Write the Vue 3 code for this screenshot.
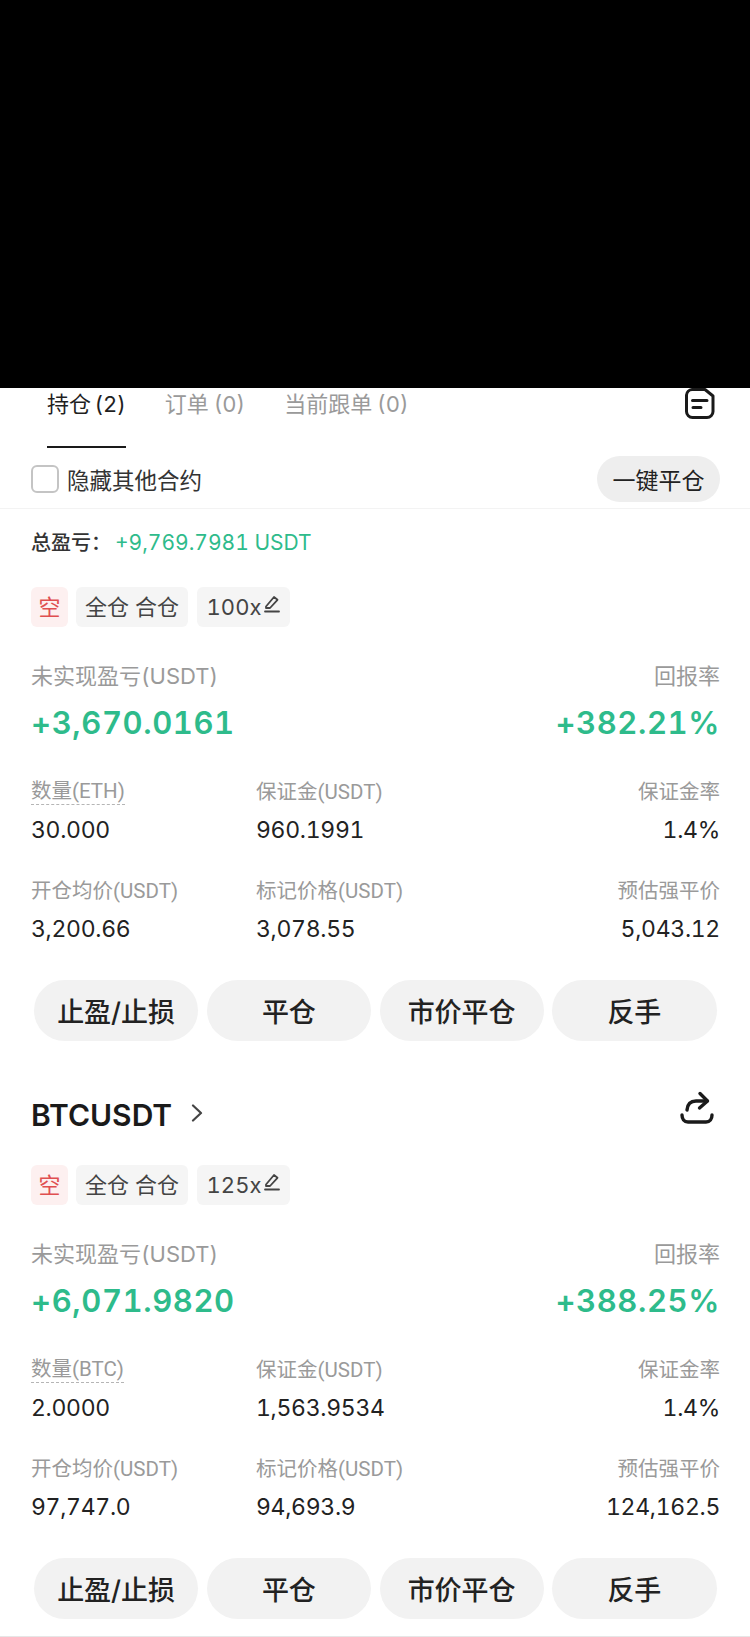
<script setup>
const cards = [
  {
    id: 'eth', lev: '100x', pnl: '+3,670.0161', roe: '+382.21%',
    rows: [
      [{ l: '数量(ETH)', v: '30.000', dash: true }, { l: '保证金(USDT)', v: '960.1991' }, { l: '保证金率', v: '1.4%' }],
      [{ l: '开仓均价(USDT)', v: '3,200.66' }, { l: '标记价格(USDT)', v: '3,078.55' }, { l: '预估强平价', v: '5,043.12' }]
    ]
  },
  {
    id: 'btc', title: 'BTCUSDT', lev: '125x', pnl: '+6,071.9820', roe: '+388.25%',
    rows: [
      [{ l: '数量(BTC)', v: '2.0000', dash: true }, { l: '保证金(USDT)', v: '1,563.9534' }, { l: '保证金率', v: '1.4%' }],
      [{ l: '开仓均价(USDT)', v: '97,747.0' }, { l: '标记价格(USDT)', v: '94,693.9' }, { l: '预估强平价', v: '124,162.5' }]
    ]
  }
]
const actions = ['止盈/止损', '平仓', '市价平仓', '反手']
</script>

<template>
  <div class="page">
    <div class="mask"></div>
    <nav class="tabs">
      <span class="tab active">持仓 (2)</span>
      <span class="tab">订单 (0)</span>
      <span class="tab">当前跟单 (0)</span>
      <svg class="doc" width="30" height="31" viewBox="0 0 30 31" fill="none" stroke="#1a1a1a" stroke-width="3" stroke-linecap="round" stroke-linejoin="round">
        <path d="M7 1.5H20L28 8V23.5A6 6 0 0 1 22 29.5H7.5A6 6 0 0 1 1.5 23.5V7A6 6 0 0 1 7 1.5Z" />
        <path d="M7.5 12.5H22M8 19.5H16" />
      </svg>
    </nav>
    <div class="filter">
      <label class="check"><i class="box"></i>隐藏其他合约</label>
      <button class="close-all">一键平仓</button>
    </div>
    <div class="total"><span>总盈亏：</span><em>+9,769.7981 USDT</em></div>

    <section v-for="c in cards" :key="c.id" class="card" :class="c.id">
      <header v-if="c.title" class="head">
        <strong>{{ c.title }}</strong>
        <svg class="chev" width="12" height="18" viewBox="0 0 12 18" fill="none" stroke="#444" stroke-width="2.2" stroke-linecap="round" stroke-linejoin="round"><path d="M2 1.5L10 9L2 16.5" /></svg>
        <svg class="share" width="36" height="34" viewBox="0 0 36 34" fill="none" stroke="#1a1a1a" stroke-width="3.4" stroke-linecap="round" stroke-linejoin="round">
          <path d="M3 24C3 28 5 31 9 31H27C31 31 33 28 33 24" />
          <path d="M8 19C8.5 13 12 10 17 10H28" />
          <path d="M21 2.5L28.5 10L20.5 17" />
        </svg>
      </header>
      <div class="tags">
        <span class="tag short">空</span>
        <span class="tag mode">全仓 合仓</span>
        <span class="tag lev">{{ c.lev }}
          <svg width="16" height="18" viewBox="0 0 16 18" fill="none" stroke="#444" stroke-width="1.8" stroke-linecap="round" stroke-linejoin="round"><path d="M2 11.5L10 2L13.5 4.8L6 13H2V11.5Z" /><path d="M1 16.5H15" /></svg>
        </span>
      </div>
      <div class="pnl">
        <div class="pnl-col"><span class="label">未实现盈亏(USDT)</span><b>{{ c.pnl }}</b></div>
        <div class="pnl-col right"><span class="label">回报率</span><b>{{ c.roe }}</b></div>
      </div>
      <div class="grid">
        <template v-for="(row, i) in c.rows" :key="i">
          <div v-for="(cell, j) in row" :key="j" class="cell">
            <span class="label" :class="{ dash: cell.dash }">{{ cell.l }}</span>
            <span class="value">{{ cell.v }}</span>
          </div>
        </template>
      </div>
      <div class="actions">
        <button v-for="a in actions" :key="a">{{ a }}</button>
      </div>
    </section>
    <div class="bottom"></div>
  </div>
</template>

<style>
html, body { margin: 0; background: #fff; }
</style>

<style scoped>
.page {
  width: 750px;
  height: 1637px;
  overflow: hidden;
  position: relative;
  background: #fff;
  font-family: Inter, "Noto Sans CJK SC", sans-serif;
  font-variant-numeric: tabular-nums;
  color: #1f1f1f;
}
.mask { height: 388px; background: #000; }
.tabs {
  height: 61px;
  display: flex;
  padding-left: 47px;
  gap: 39px;
  position: relative;
}
.tab {
  font-size: 22px;
  line-height: 32px;
  color: #9a9a9a;
  height: 34px;
  word-spacing: -1px;
}
.tab.active { color: #1f1f1f; position: relative; word-spacing: -2px; letter-spacing: -0.1px; }
.tab.active::after {
  content: "";
  position: absolute;
  left: 0;
  right: 0;
  top: 58px;
  height: 2px;
  background: #1a1a1a;
}
.doc { position: absolute; right: 35px; top: 0; }
.filter {
  height: 59px;
  border-bottom: 1px solid #f3f3f3;
  padding: 0 30px 0 31px;
  display: flex;
  align-items: center;
  justify-content: space-between;
}
.check {
  display: flex;
  align-items: center;
  gap: 8px;
  font-size: 22.5px;
  color: #333;
}
.box {
  width: 24px;
  height: 24px;
  border: 2px solid #c4c4c4;
  border-radius: 6px;
}
.close-all {
  width: 123px;
  height: 46px;
  margin-top: 1px;
  border: 0;
  border-radius: 23px;
  background: #eeeeee;
  font: inherit;
  font-size: 23px;
  color: #222;
  padding: 0;
}
.total {
  margin-top: 23px;
  padding-left: 31px;
  line-height: 22px;
  font-size: 20px;
  display: flex;
  align-items: center;
}
.total span { width: 84px; color: #333; font-weight: 500; }
.total em { font-style: normal; font-size: 21px; color: #2ebb8b; }
.card { padding: 0 30px 0 31px; }
.head {
  margin-top: 56px;
  height: 36px;
  display: flex;
  align-items: center;
  position: relative;
}
.head strong { font-size: 30px; font-weight: 600; color: #1a1a1a; }
.chev { margin-left: 19px; margin-top: -5px; }
.share { position: absolute; right: 5px; top: -6px; }
.tags { display: flex; margin-top: 33px; gap: 8px; }
.btc .tags { margin-top: 32px; }
.tag {
  height: 40px;
  line-height: 40px;
  box-sizing: border-box;
  border-radius: 6px;
  font-size: 22px;
  background: #f5f5f5;
  color: #444;
  display: flex;
  align-items: center;
  justify-content: center;
}
.tag.short { width: 37px; background: #fdf0f0; color: #e04f50; }
.tag.mode { width: 112px; }
.tag.lev { width: 93px; margin-left: 1px; gap: 3px; }
.tag.lev svg { margin-top: -6px; }
.pnl {
  margin-top: 36px;
  display: flex;
  justify-content: space-between;
}
.pnl-col { display: flex; flex-direction: column; }
.pnl-col.right { align-items: flex-end; }
.pnl .label { font-size: 22px; }
.pnl b {
  margin-top: 16px;
  font-size: 31px;
  line-height: 36px;
  font-weight: 600;
  color: #2ebb8b;
  letter-spacing: 0.6px;
}
.label { line-height: 26px; color: #9a9a9a; }
.grid {
  margin-top: 38px;
  display: grid;
  grid-template-columns: 225px 1fr 1fr;
  row-gap: 34px;
}
.grid .label { font-family: Roboto, "Noto Sans CJK SC", sans-serif; font-size: 20.5px; }
.cell { display: flex; flex-direction: column; align-items: flex-start; }
.cell:nth-child(3n) { align-items: flex-end; }
.grid .label.dash {
  line-height: 24px;
  height: 25px;
  border-bottom: 1px dashed #b5b5b5;
}
.value {
  margin-top: 11px;
  font-size: 23px;
  line-height: 28px;
  letter-spacing: -0.3px;
  color: #222;
}
.actions {
  margin-top: 37px;
  display: flex;
  gap: 8.5px;
  padding: 0 3.5px 0 3px;
}
.actions button {
  flex: 1 1 0;
  min-width: 0;
  height: 61px;
  border: 0;
  border-radius: 31px;
  background: #f2f2f2;
  font: inherit;
  font-size: 27px;
  font-weight: 500;
  color: #222;
  padding: 0;
}
.bottom {
  position: absolute;
  left: 0;
  right: 0;
  bottom: 0;
  height: 1px;
  background: #e6e6e6;
}
</style>
